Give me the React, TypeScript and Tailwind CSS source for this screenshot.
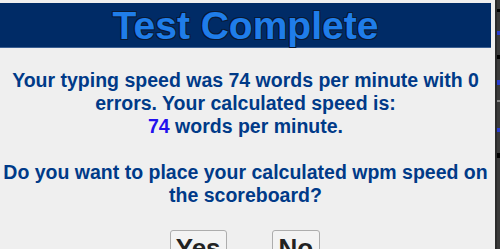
import React from 'react';

// Result panel shown after a typing test finishes
const typedWpm = 74;
const errors = 0;
const calculatedWpm = 74;

const SideStrip: React.FC = () => (
  <div className="flex h-[249px] w-[5px] shrink-0">
    <div className="w-[2px] bg-[#2b2b2b]" />
    <div className="flex w-[3px] flex-col bg-[#3a3a3a]">
      <div className="mt-[9px] h-[3px] bg-black" />
      <div className="mt-[19px] h-[4px] bg-[#2a3fd0]" />
      <div className="mt-[20px] h-[4px] bg-black" />
      <div className="mt-[21px] h-[5px] bg-[#2a3fd0]" />
      <div className="mt-[15px] h-[2px] bg-[#8a8a8a]" />
      <div className="mt-[26px] h-[4px] bg-[#2a3fd0]" />
      <div className="mt-[21px] h-[5px] bg-black" />
    </div>
  </div>
);

export default function App() {
  return (
    <div className="flex h-[249px] w-[500px] overflow-hidden bg-[#efefef] font-['Liberation_Sans',Arial,sans-serif]">
      <div className="w-[491px] shrink-0 pt-[3px]">
        <div className="h-[45px] border-b border-[#3b5f92] bg-[#002b66] text-center">
          <h1 className="text-[39px] font-bold leading-[45px] text-[#1f7de9] [text-shadow:1px_1px_0_#0a1a33,-1px_-1px_0_#0a1a33,1px_-1px_0_#0a1a33,-1px_1px_0_#0a1a33]">
            Test Complete
          </h1>
        </div>

        <div className="px-[2px] pt-[21px] text-center text-[19.5px] font-bold leading-[23px] text-[#003a88]">
          <p>
            Your typing speed was {typedWpm} words per minute with {errors} errors. Your
            calculated speed is:
            <br />
            <span className="text-[#2210ee]">{calculatedWpm}</span> words per minute.
          </p>
          <p className="mt-[23px]">
            Do you want to place your calculated wpm speed on the scoreboard?
          </p>
        </div>

        <div className="mt-[23px] flex justify-center gap-[45px] pr-[1px]">
          <button className="rounded-[3px] border border-[#adadad] bg-[#f3f3f3] px-[5px] text-[26px] font-bold leading-[34px] text-[#222]">
            Yes
          </button>
          <button className="rounded-[3px] border border-[#adadad] bg-[#f3f3f3] px-[6px] text-[26px] font-bold leading-[34px] text-[#222]">
            No
          </button>
        </div>
      </div>
      <div className="w-[4px] shrink-0" />
      <SideStrip />
    </div>
  );
}
